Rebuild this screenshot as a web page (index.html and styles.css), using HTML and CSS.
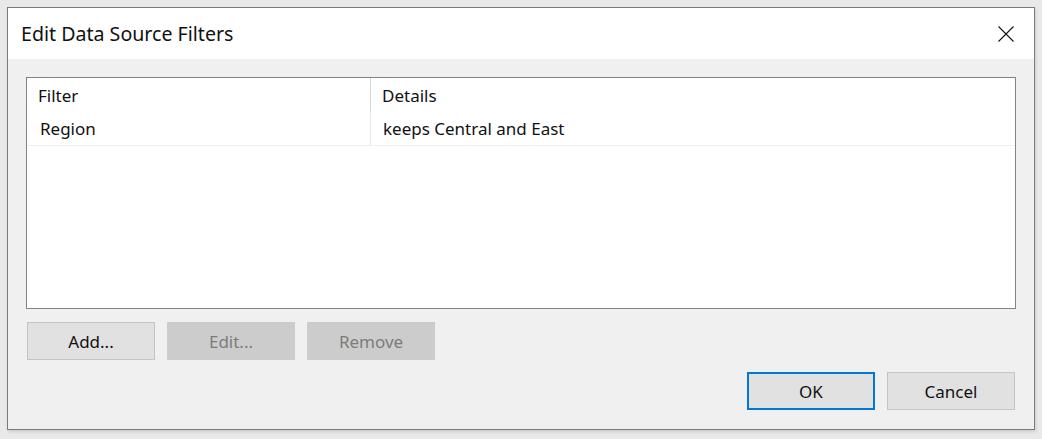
FILE: index.html
```html
<!DOCTYPE html>
<html>
<head>
<meta charset="utf-8">
<link rel="stylesheet" href="styles.css">
</head>
<body>
<div class="dialog">
  <div class="titlebar">
    <span class="title">Edit Data Source Filters</span>
    <svg class="close" width="16" height="16" viewBox="0 0 16 16"><path d="M0.5 0.5 L15.5 15.5 M15.5 0.5 L0.5 15.5" stroke="#111" stroke-width="1.1" fill="none"/></svg>
  </div>
  <div class="body">
    <div class="list">
      <div class="row header">
        <div class="cell c1">Filter</div>
        <div class="cell c2">Details</div>
      </div>
      <div class="row item">
        <div class="cell c1">Region</div>
        <div class="cell c2">keeps Central and East</div>
      </div>
    </div>
    <div class="actions">
      <button class="btn">Add...</button>
      <button class="btn disabled">Edit...</button>
      <button class="btn disabled">Remove</button>
    </div>
    <div class="footer">
      <button class="btn primary">OK</button>
      <button class="btn">Cancel</button>
    </div>
  </div>
</div>
</body>
</html>
```
FILE: styles.css
```css
html, body {
  margin: 0;
  padding: 0;
}
body {
  background: #e9e9e9;
  width: 1042px;
  height: 439px;
  padding: 7px 0 0 7px;
  box-sizing: border-box;
  font-family: "Noto Sans", "Open Sans", sans-serif;
  color: #111;
}
.dialog {
  width: 1028px;
  height: 423px;
  border: 1px solid #7a7a7a;
  box-sizing: border-box;
  background: #f0f0f0;
  display: flex;
  flex-direction: column;
  box-shadow: 1px 2px 3px rgba(0,0,0,0.12);
}
.titlebar {
  height: 51px;
  background: #fff;
  display: flex;
  align-items: center;
  justify-content: space-between;
  padding: 0 20px 0 13px;
  flex: none;
}
.title {
  font-size: 19.6px;
}
.close {
  display: block;
}
.body {
  flex: 1;
  padding: 18px 18px 0 18px;
  display: flex;
  flex-direction: column;
}
.list {
  height: 232px;
  border: 1px solid #828282;
  background: #fff;
  box-sizing: border-box;
  flex: none;
}
.row {
  display: flex;
}
.cell {
  font-size: 17px;
  line-height: 20px;
  white-space: nowrap;
  box-sizing: border-box;
}
.c1 {
  width: 344px;
  border-right: 1px solid #e6e6e6;
}
.header .c1 {
  border-right-color: #d6d6d6;
}
.header {
  height: 34px;
}
.header .cell {
  height: 34px;
  display: flex;
  align-items: center;
  padding-top: 2px;
}
.header .c1 { padding-left: 11px; }
.header .c2 { padding-left: 11px; }
.item {
  height: 33px;
  border-bottom: 1px solid #f0f0f0;
}
.item .cell {
  display: flex;
  align-items: center;
  height: 33px;
}
.item .c1 { padding-left: 13px; }
.item .c2 { padding-left: 12px; }
.actions {
  display: flex;
  gap: 12px;
  margin-top: 13px;
  padding-left: 1px;
}
.btn {
  width: 128px;
  height: 38px;
  background: #e1e1e1;
  border: 1px solid #c4c4c4;
  font-family: "Noto Sans", "Open Sans", sans-serif;
  font-size: 17px;
  color: #111;
  padding: 0;
  box-sizing: border-box;
}
.btn.disabled {
  background: #cccccc;
  border-color: #cccccc;
  color: #7c7c7c;
}
.btn.primary {
  border: 2px solid #0078d7;
}
.footer {
  display: flex;
  justify-content: flex-end;
  gap: 12px;
  margin-top: 12px;
  padding-right: 1px;
}
```
